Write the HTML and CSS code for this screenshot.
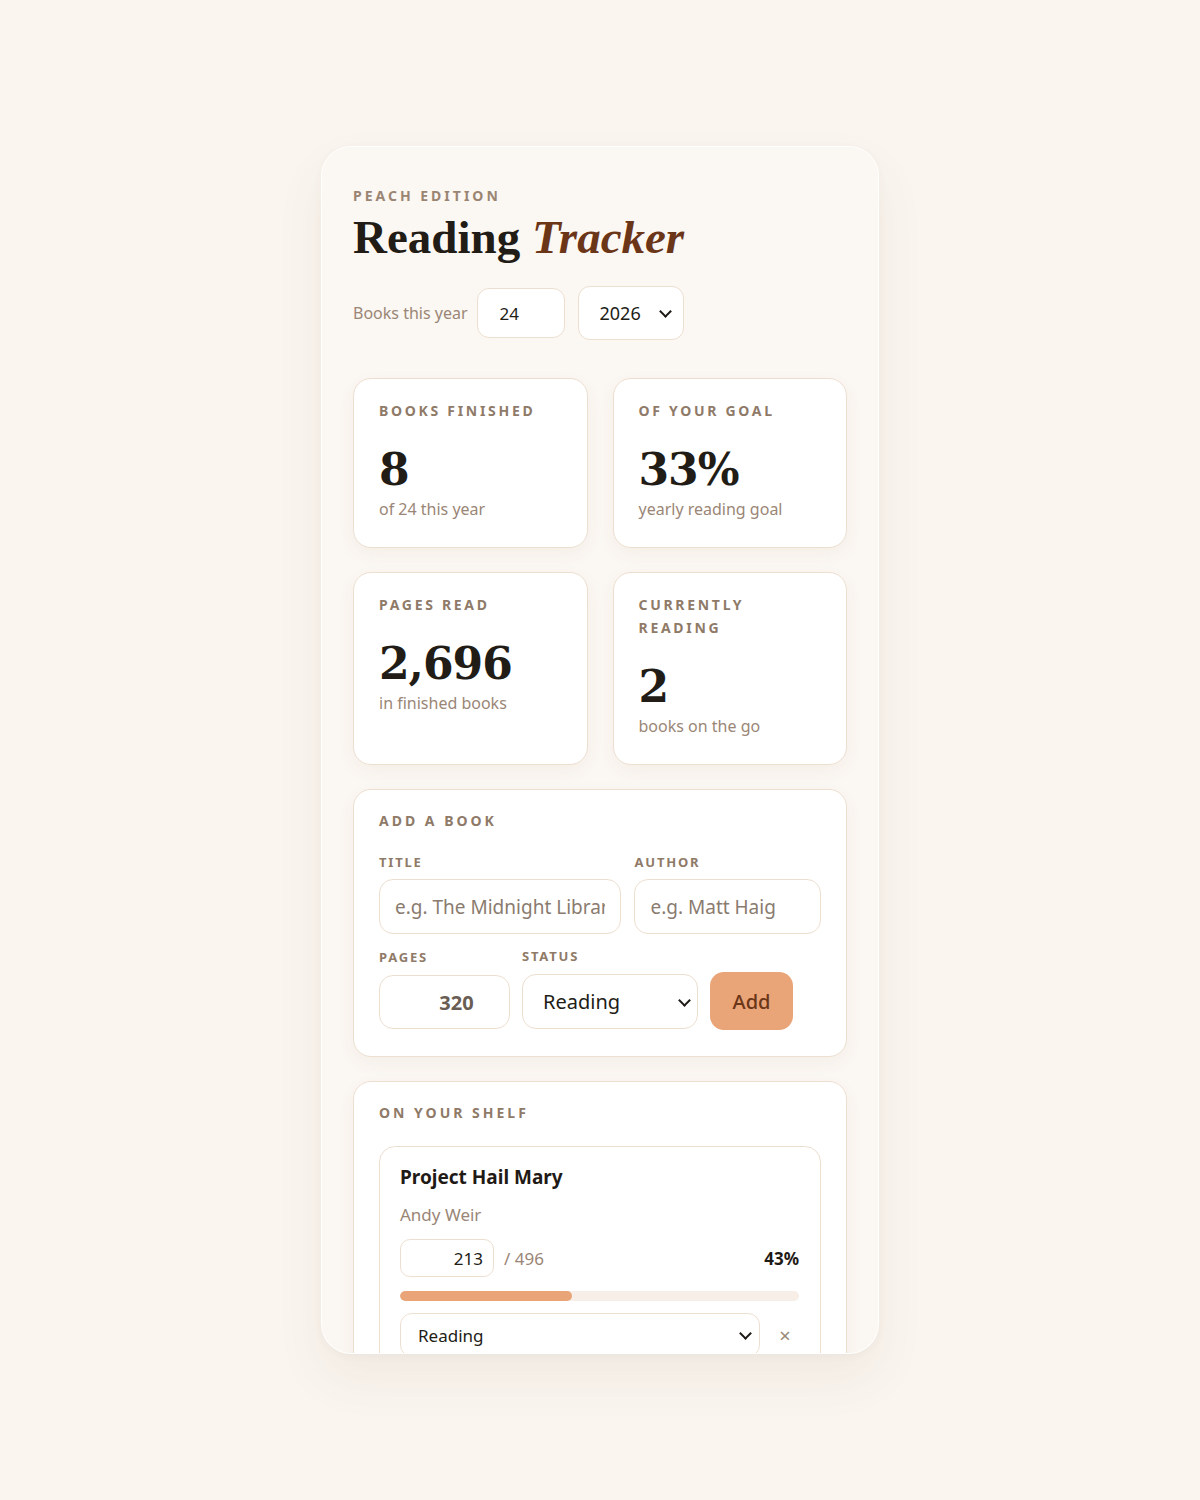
FILE: index.html
```html
<!DOCTYPE html>
<html lang="en">
<head>
<meta charset="utf-8">
<title>Reading Tracker</title>
<link rel="stylesheet" href="styles.css">
</head>
<body>
<main class="app">
  <header class="head">
    <p class="eyebrow">Peach Edition</p>
    <h1 class="title">Reading <em>Tracker</em></h1>
    <div class="goal-row">
      <label class="goal-label" for="goal">Books this year</label>
      <input class="goal-input" id="goal" type="number" value="24">
      <span class="select-wrap year-wrap">
        <select class="year-select">
          <option>2026</option>
          <option>2025</option>
        </select>
      </span>
    </div>
  </header>

  <section class="stats">
    <div class="stat">
      <p class="stat-label">Books finished</p>
      <p class="stat-value">8</p>
      <p class="stat-sub">of 24 this year</p>
    </div>
    <div class="stat">
      <p class="stat-label">Of your goal</p>
      <p class="stat-value">33%</p>
      <p class="stat-sub">yearly reading goal</p>
    </div>
    <div class="stat">
      <p class="stat-label">Pages read</p>
      <p class="stat-value">2,696</p>
      <p class="stat-sub">in finished books</p>
    </div>
    <div class="stat">
      <p class="stat-label">Currently reading</p>
      <p class="stat-value">2</p>
      <p class="stat-sub">books on the go</p>
    </div>
  </section>

  <section class="panel add">
    <h2 class="panel-label">Add a book</h2>
    <div class="add-row1">
      <div class="field">
        <label class="field-label">Title</label>
        <input class="text-input" type="text" placeholder="e.g. The Midnight Library">
      </div>
      <div class="field">
        <label class="field-label">Author</label>
        <input class="text-input" type="text" placeholder="e.g. Matt Haig">
      </div>
    </div>
    <div class="add-row2">
      <div class="field">
        <label class="field-label">Pages</label>
        <input class="text-input pages-input" type="number" value="320">
      </div>
      <div class="field">
        <label class="field-label">Status</label>
        <span class="select-wrap status-wrap">
          <select class="status-select">
            <option>Reading</option>
            <option>Finished</option>
            <option>Want to read</option>
          </select>
        </span>
      </div>
      <button class="add-btn" type="button">Add</button>
    </div>
  </section>

  <section class="panel shelf">
    <h2 class="panel-label">On your shelf</h2>
    <article class="book">
      <h3 class="book-title">Project Hail Mary</h3>
      <p class="book-author">Andy Weir</p>
      <div class="progress-row">
        <input class="page-input" type="number" value="213">
        <span class="page-total">/ 496</span>
        <span class="page-pct">43%</span>
      </div>
      <div class="bar"><div class="bar-fill" style="width:43%"></div></div>
      <div class="book-actions">
        <span class="select-wrap book-wrap">
          <select class="book-select">
            <option>Reading</option>
            <option>Finished</option>
          </select>
        </span>
        <button class="remove-btn" type="button" aria-label="Remove">×</button>
      </div>
    </article>
  </section>
</main>
</body>
</html>
```

FILE: styles.css
```css
* { box-sizing: border-box; }

html, body {
  margin: 0;
  padding: 0;
  background: #faf5ef;
}

body {
  font-family: "Noto Sans", "Open Sans", sans-serif;
  color: #221c16;
  padding: 146px 0 100px;
}

.app {
  width: 558px;
  height: 1208px;
  margin: 0 auto 0 321px;
  padding: 39px 31px 0;
  background: #fbf7f2;
  border: 1px solid rgba(255, 255, 255, 0.9);
  border-radius: 30px;
  box-shadow: 0 24px 50px rgba(110, 80, 50, 0.07), 0 2px 8px rgba(110, 80, 50, 0.04);
  overflow: hidden;
}

.eyebrow {
  margin: 0 0 5px;
  font-size: 14px;
  line-height: 20px;
  font-weight: 700;
  letter-spacing: 3px;
  text-transform: uppercase;
  color: #9a8572;
}

.title {
  margin: 0;
  font-family: "Liberation Serif", "Times New Roman", serif;
  font-size: 47px;
  line-height: 53px;
  font-weight: 700;
  color: #221c16;
}

.title em {
  font-style: italic;
  color: #6b3518;
}

.goal-row {
  display: flex;
  align-items: center;
  margin-top: 22px;
}

.goal-label {
  font-size: 16px;
  color: #9a8676;
  margin-right: 9px;
}

.goal-input {
  width: 88px;
  height: 50px;
  padding: 0 0 0 22px;
  font: 400 17px "Noto Sans", sans-serif;
  color: #221c16;
  background: #fff;
  border: 1.5px solid #eddfd0;
  border-radius: 12px;
  outline: none;
}

/* custom select chevron */
.select-wrap {
  position: relative;
  display: block;
}

.select-wrap::after {
  content: "";
  position: absolute;
  top: 50%;
  width: 7px;
  height: 7px;
  margin-top: -6px;
  border-right: 2.6px solid #1d1915;
  border-bottom: 2.6px solid #1d1915;
  transform: rotate(45deg);
  pointer-events: none;
}

.select-wrap select {
  -webkit-appearance: none;
  appearance: none;
  display: block;
  width: 100%;
  background: #fff;
  border: 1.5px solid #eddfd0;
  color: #221c16;
  outline: none;
}

.year-wrap {
  width: 106px;
  margin-left: 13px;
}
.year-wrap::after { right: 14px; }

.year-select {
  height: 54px;
  padding: 0 30px 0 21px;
  font: 400 18px "Noto Sans", sans-serif;
  border-radius: 12px;
}

input[type=number]::-webkit-inner-spin-button,
input[type=number]::-webkit-outer-spin-button {
  -webkit-appearance: none;
  margin: 0;
}
input[type=number] { -moz-appearance: textfield; }

.stats {
  display: grid;
  grid-template-columns: 1fr 1fr;
  column-gap: 25px;
  row-gap: 24px;
  margin-top: 38px;
}

.stat {
  padding: 20px 25px 26px;
  background: #fff;
  border: 1.5px solid #eddfd0;
  border-radius: 18px;
  box-shadow: 0 6px 18px rgba(120, 85, 50, 0.05);
}

.stat p { margin: 0; }

.stat-label {
  font-size: 14px;
  line-height: 23px;
  font-weight: 700;
  letter-spacing: 2.7px;
  text-transform: uppercase;
  color: #8f7a68;
}

.stat-value {
  margin-top: 26px !important;
  font-family: "DejaVu Serif", serif;
  font-size: 44px;
  line-height: 44px;
  font-weight: 700;
  letter-spacing: -1px;
  color: #221c16;
}

.stat-sub {
  margin-top: 5px !important;
  font-size: 16px;
  line-height: 24px;
  color: #9a8676;
}

.panel {
  margin-top: 24px;
  padding: 19px 25px 27px;
  background: #fff;
  border: 1.5px solid #eddfd0;
  border-radius: 18px;
  box-shadow: 0 6px 18px rgba(120, 85, 50, 0.05);
}

.panel-label {
  margin: 0;
  font-size: 14px;
  line-height: 23px;
  font-weight: 700;
  letter-spacing: 3px;
  text-transform: uppercase;
  color: #8f7a68;
}

.add-row1 {
  display: grid;
  grid-template-columns: 1.3fr 1fr;
  gap: 13px;
  margin-top: 20px;
}

.field {
  display: flex;
  flex-direction: column;
  min-width: 0;
}

.field-label {
  font-size: 13px;
  line-height: 20px;
  font-weight: 700;
  letter-spacing: 1.8px;
  text-transform: uppercase;
  color: #8f7a68;
  margin-bottom: 7px;
}

.text-input {
  width: 100%;
  height: 55px;
  padding: 0 15px;
  font: 400 19px "Noto Sans", sans-serif;
  color: #221c16;
  background: #fff;
  border: 1.5px solid #eddfd0;
  border-radius: 14px;
  outline: none;
}

.text-input::placeholder { color: #8a7b6f; }

.add-row2 {
  display: grid;
  grid-template-columns: 131px 176px 83px;
  gap: 12px;
  align-items: end;
  margin-top: 12px;
}

.add-row2 .field-label { margin-bottom: 8px; }

.pages-input {
  height: 54px;
  padding: 0 0 0 24px;
  text-align: center;
  font-size: 20px;
  font-weight: 700;
  color: #6a5d53;
}

.status-wrap::after { right: 9px; }

.status-select {
  height: 55px;
  padding: 0 30px 0 20px;
  font: 400 20px "Noto Sans", sans-serif;
  border-radius: 14px;
}

.add-btn {
  height: 58px;
  margin-bottom: -1px;
  font: 500 20px "Noto Sans", sans-serif;
  color: #6b3518;
  background: #e9a477;
  border: none;
  border-radius: 14px;
}

.book {
  margin-top: 22px;
  padding: 17px 21px 20px 20px;
  border: 1.5px solid #eddfd0;
  border-radius: 16px;
  background: #fff;
}

.book-title {
  margin: 0;
  font-size: 19px;
  line-height: 26px;
  font-weight: 700;
  color: #1f1a15;
}

.book-author {
  margin: 13px 0 0;
  font-size: 17px;
  line-height: 24px;
  color: #9a8676;
}

.progress-row {
  display: flex;
  align-items: center;
  margin-top: 12px;
}

.page-input {
  width: 94px;
  height: 38px;
  padding: 0 10px;
  text-align: right;
  font: 400 17px "Noto Sans", sans-serif;
  color: #221c16;
  background: #fff;
  border: 1.5px solid #eddfd0;
  border-radius: 10px;
  outline: none;
}

.page-total {
  margin-left: 10px;
  font-size: 17px;
  color: #9a8676;
}

.page-pct {
  margin-left: auto;
  font-size: 17px;
  font-weight: 700;
  color: #1f1a15;
}

.bar {
  height: 10px;
  margin-top: 14px;
  background: #f6eee7;
  border-radius: 5px;
  overflow: hidden;
}

.bar-fill {
  height: 100%;
  background: #e9a477;
  border-radius: 5px;
}

.book-actions {
  display: flex;
  align-items: center;
  margin-top: 12px;
}

.book-wrap { flex: 1; }
.book-wrap::after { right: 10px; }

.book-select {
  height: 44px;
  padding: 0 30px 0 17px;
  font: 400 17px "Noto Sans", sans-serif;
  border-radius: 12px;
}

.remove-btn {
  width: 28px;
  margin-left: 11px;
  padding: 0;
  font: 400 20px "Noto Sans", sans-serif;
  color: #9a8676;
  background: none;
  border: none;
}
```
